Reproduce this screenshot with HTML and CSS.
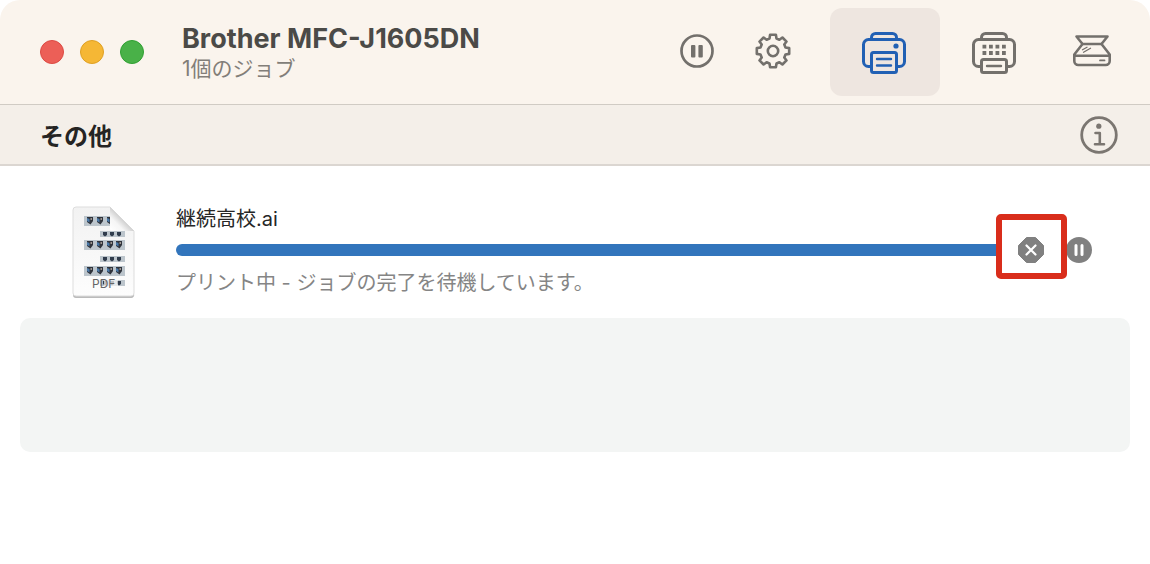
FILE: index.html
```html
<!DOCTYPE html>
<html lang="ja">
  <head>
    <meta charset="UTF-8" />
    <meta name="viewport" content="width=device-width, initial-scale=1.0" />
    <title>Brother MFC-J1605DN</title>
    <link rel="stylesheet" href="styles.css" />
  </head>
  <body>
    <div class="window">
      <header class="titlebar">
        <div class="lights">
          <button type="button" class="light close" aria-label="閉じる"></button>
          <button type="button" class="light minimize" aria-label="しまう"></button>
          <button type="button" class="light maximize" aria-label="拡大"></button>
        </div>

        <div class="title">
          <h1>Brother MFC-J1605DN</h1>
          <p>1個のジョブ</p>
        </div>

        <div class="toolbar">
          <button type="button" class="tool small" aria-label="一時停止">
            <svg width="36" height="36" viewBox="0 0 36 36">
              <circle cx="18" cy="18" r="15.5" fill="none" stroke="currentColor" stroke-width="2.7" />
              <rect x="12" y="12" width="4.4" height="12.5" rx="1" fill="currentColor" />
              <rect x="19.4" y="12" width="4.4" height="12.5" rx="1" fill="currentColor" />
            </svg>
          </button>
          <button type="button" class="tool small last" aria-label="設定">
            <svg width="36" height="36" viewBox="-18 -18 36 36" fill="none" stroke="currentColor" stroke-width="2.6" stroke-linejoin="round">
              <path d="M-3.5-12.5L-2.9-16.2H2.9L3.5-12.5L6.4-11.3L9.4-13.5L13.5-9.4L11.3-6.4L12.5-3.5L16.2-2.9V2.9L12.5 3.5L11.3 6.4L13.5 9.4L9.4 13.5L6.4 11.3L3.5 12.5L2.9 16.2H-2.9L-3.5 12.5L-6.4 11.3L-9.4 13.5L-13.5 9.4L-11.3 6.4L-12.5 3.5L-16.2 2.9V-2.9L-12.5-3.5L-11.3-6.4L-13.5-9.4L-9.4-13.5L-6.4-11.3Z" />
              <circle r="5.2" />
            </svg>
          </button>
          <button type="button" class="tool active" aria-label="プリンタ" aria-pressed="true">
            <svg width="44" height="42" viewBox="0 0 44 42" fill="none" stroke="currentColor" stroke-width="3" stroke-linecap="round">
              <path d="M9.5 7V5.5a4 4 0 0 1 4-4h17a4 4 0 0 1 4 4V7" />
              <path d="M8.5 34.5h-2a5 5 0 0 1-5-5v-17a5 5 0 0 1 5-5h31a5 5 0 0 1 5 5v17a5 5 0 0 1-5 5h-2" />
              <rect x="9.5" y="20.5" width="25" height="20" rx="2" />
              <path d="M15 27h14M15 33.5h14" stroke-width="2.4" />
              <circle cx="34" cy="14" r="2.6" fill="currentColor" stroke="none" />
            </svg>
          </button>
          <button type="button" class="tool" aria-label="サプライ">
            <svg width="44" height="42" viewBox="0 0 44 42" fill="none" stroke="currentColor" stroke-width="3" stroke-linecap="round">
              <path d="M9.5 7V5.5a4 4 0 0 1 4-4h17a4 4 0 0 1 4 4V7" />
              <path d="M8.5 34.5h-2a5 5 0 0 1-5-5v-17a5 5 0 0 1 5-5h31a5 5 0 0 1 5 5v17a5 5 0 0 1-5 5h-2" />
              <rect x="9.5" y="27.5" width="25" height="13" rx="2" />
              <path d="M15 34h14" stroke-width="2.4" />
              <path d="M10.5 14.6h24M10.5 21h24" stroke-width="3.8" stroke-linecap="butt" stroke-dasharray="3.8 2.7" />
            </svg>
          </button>
          <button type="button" class="tool scan" aria-label="スキャナ">
            <svg width="40" height="34" viewBox="0 0 40 34" fill="none" stroke="currentColor" stroke-width="2.6" stroke-linejoin="round" stroke-linecap="round">
              <path d="M4.5 2.5h31l-6 7.5h-19z" />
              <path d="M10.500 10L2.300 20.500v6.500a4 4 0 0 0 4 4h27.400a4 4 0 0 0 4-4v-6.500L29.500 10M2.500 21.700h35" />
              <path d="M28 26.400h4.500" stroke-width="1.800" />
              <path d="M10.500 15.800l4.500-2.500M11.500 18.300l7-4" stroke-width="1.300" />
            </svg>
          </button>
        </div>
      </header>

      <div class="section-bar">
        <h2>その他</h2>
        <button type="button" class="info" aria-label="情報">
          <svg width="38" height="38" viewBox="0 0 38 38" fill="none" stroke="currentColor">
            <circle cx="19" cy="19" r="17.3" stroke-width="2.8" />
            <circle cx="18.8" cy="10.2" r="2.6" fill="currentColor" stroke="none" />
            <path d="M15.500 17h4.300v11.200M15 28.200h9" stroke-width="2.600" stroke-linecap="round" stroke-linejoin="round" />
          </svg>
        </button>
      </div>

      <main class="jobs">
        <article class="job">
          <svg class="file-icon" width="68" height="96" viewBox="0 -2 68 96">
            <defs>
              <linearGradient id="page" x1="0" y1="0" x2="0" y2="1">
                <stop offset="0" stop-color="#f2f2f2" />
                <stop offset="1" stop-color="#fdfdfd" />
              </linearGradient>
              <linearGradient id="fold" x1="0" y1="1" x2="1" y2="0">
                <stop offset="0" stop-color="#fff" />
                <stop offset=".3" stop-color="#f5f5f5" />
                <stop offset=".55" stop-color="#c8c8c8" />
              </linearGradient>
              <clipPath id="sheet">
                <path d="M3 2h36l26 26v64H3z" />
              </clipPath>
              <g id="badge">
                <path d="M0 0h6v4L3.500 7.500 0 5z" fill="#30343c" />
                <path d="M0 1l2.500 1v3.500L0 4z" fill="#4978a8" />
                <path d="M3.500 1h1.500v2h-1.500z" fill="#9b9490" />
              </g>
              <g id="wide">
                <path d="M0 0h41v10H0z" fill="#bcc5cc" />
                <use href="#badge" x="3" y="1" />
                <use href="#badge" x="13" y="1" />
                <use href="#badge" x="23" y="1" />
                <use href="#badge" x="32" y="1" />
              </g>
              <g id="narrow">
                <path d="M0 0h25v6H0z" fill="#bcc5cc" />
                <path d="M3 1h4v3L5 5.500 3 4zM10 1h4v3l-2 1.500L10 4zM17 1h4v3l-2 1.500L17 4z" fill="#303c4c" />
              </g>
            </defs>
            <path d="M6 4h34l24 24v61a3 3 0 0 1-3 4H6a3 3 0 0 1-3-3V7a3 3 0 0 1 3-3z" fill="#bbb" />
            <path d="M6 2h34l24 24v62a3 3 0 0 1-3 3H6a3 3 0 0 1-3-3V5a3 3 0 0 1 3-3z" fill="url(#page)" stroke="#ddd" />
            <g clip-path="url(#sheet)">
              <use href="#wide" x="14" y="11" />
              <use href="#narrow" x="30" y="26" />
              <use href="#wide" x="14" y="35" />
              <use href="#narrow" x="30" y="51" />
              <use href="#wide" x="14" y="61" />
              <use href="#narrow" x="30" y="75" />
            </g>
            <path d="M34 75h14v6H34z" fill="#fafafa" opacity=".7" />
            <path d="M40 2l24 24H42a2 2 0 0 1-2-2z" fill="url(#fold)" />
            <text x="22" y="83" class="file-type">PDF</text>
          </svg>

          <div class="job-info">
            <label class="job-name" for="progress">継続高校.ai</label>
            <progress id="progress" max="100" value="100"></progress>
            <p class="job-status">プリント中 - ジョブの完了を待機しています。</p>
          </div>

          <div class="job-actions">
            <button type="button" class="action highlighted" aria-label="ジョブを削除">
              <svg width="26" height="26" viewBox="0 0 26 26">
                <path d="M8.500.5h9l8 8v9l-8 8h-9l-8-8v-9z" fill="#808080" stroke="#808080" stroke-linejoin="round" />
                <path d="M8.500 8.500l9 9M17.500 8.500l-9 9" stroke="#fff" stroke-width="2.200" stroke-linecap="round" />
              </svg>
            </button>
            <button type="button" class="action" aria-label="ジョブを一時停止">
              <svg width="26" height="26" viewBox="0 0 26 26">
                <circle cx="13" cy="13" r="13" fill="#808080" />
                <path d="M10 8.500v9M16 8.500v9" stroke="#fff" stroke-width="3" stroke-linecap="round" />
              </svg>
            </button>
          </div>
        </article>

        <div class="empty-row"></div>
      </main>
    </div>
  </body>
</html>
```
FILE: styles.css
```css
*,
*::before,
*::after {
  margin: 0;
  padding: 0;
  box-sizing: border-box;
}

body {
  font-family: Inter, "Noto Sans CJK JP", sans-serif;
  font-size: 20px;
  line-height: 28px;
  background: #fff;
}

button {
  border: none;
  background: none;
  color: #73706c;
  cursor: pointer;
}

svg {
  display: block;
}

.window {
  min-height: 100vh;
  border-radius: 20px 20px 0 0;
  overflow: hidden;
}

/* title bar */
.titlebar {
  display: flex;
  align-items: center;
  padding: 8px 16px 8px 40px;
  background: #faf4ed;
  border-bottom: 1px solid #d0cbc4;
}

.lights {
  display: flex;
  gap: 16px;
  margin-right: 38px;
}

.light {
  width: 24px;
  height: 24px;
  border-radius: 50%;
}

.close {
  background: #ec5f57;
  border: 1px solid #dc4a43;
}

.minimize {
  background: #f5b735;
  border: 1px solid #dfa023;
}

.maximize {
  background: #49b148;
  border: 1px solid #30a032;
}

.title {
  flex: 1;
  padding-top: 2px;
  white-space: nowrap;
}

.title h1 {
  font-size: 27px;
  line-height: 32px;
  color: #4b4a47;
}

.title p {
  font-size: 21px;
  color: #827e79;
}

.toolbar {
  display: flex;
}

.tool {
  display: flex;
  align-items: center;
  justify-content: center;
  width: 110px;
  height: 88px;
  padding: 2px 2px 0 0;
  border-radius: 12px;
}

.tool.small {
  width: 76px;
  padding: 0 0 2px;
}

.tool.last {
  margin-right: 19px;
}

.tool.scan {
  width: 84px;
  padding: 0 0 2px;
}

.tool.active {
  background: #eee6e0;
  color: #2160b4;
}

/* section bar */
.section-bar {
  display: flex;
  align-items: center;
  justify-content: space-between;
  height: 61px;
  padding: 0 32px 0 40px;
  background: #f4efe9;
  border-bottom: 2px solid #dbd6d1;
}

.section-bar h2 {
  padding-top: 4px;
  font-size: 24px;
  color: #252423;
}

.info {
  color: #7b7671;
}

/* job list */
.jobs {
  padding: 37px 20px 20px;
}

.job {
  display: flex;
  align-items: center;
  padding: 0 38px 0 50px;
  margin-bottom: 19px;
}

.file-icon {
  flex: none;
  margin-right: 38px;
}

.file-type {
  font-size: 12px;
  fill: #666;
}

.job-info {
  flex: 1;
  min-width: 0;
}

.job-name {
  display: block;
  color: #262626;
}

progress {
  display: block;
  width: 100%;
  height: 12px;
  margin: 11px 0 13px;
  appearance: none;
  border: none;
  border-radius: 6px 0 0 6px;
  overflow: hidden;
}

progress::-webkit-progress-bar {
  background: #e5e5e5;
}

progress::-webkit-progress-value {
  background: #3275bc;
}

.job-status {
  color: #858585;
}

.job-actions {
  display: flex;
  gap: 22px;
  margin-left: 22px;
  padding-bottom: 2px;
}

.action {
  position: relative;
  width: 26px;
  height: 26px;
}

.highlighted {
  z-index: 1;
}

.highlighted::after {
  content: "";
  position: absolute;
  inset: -23px -23px -16px -22px;
  border: 6px solid #d92d1b;
  border-radius: 5px;
}

.empty-row {
  height: 134px;
  border-radius: 10px;
  background: #f3f5f4;
}
```
